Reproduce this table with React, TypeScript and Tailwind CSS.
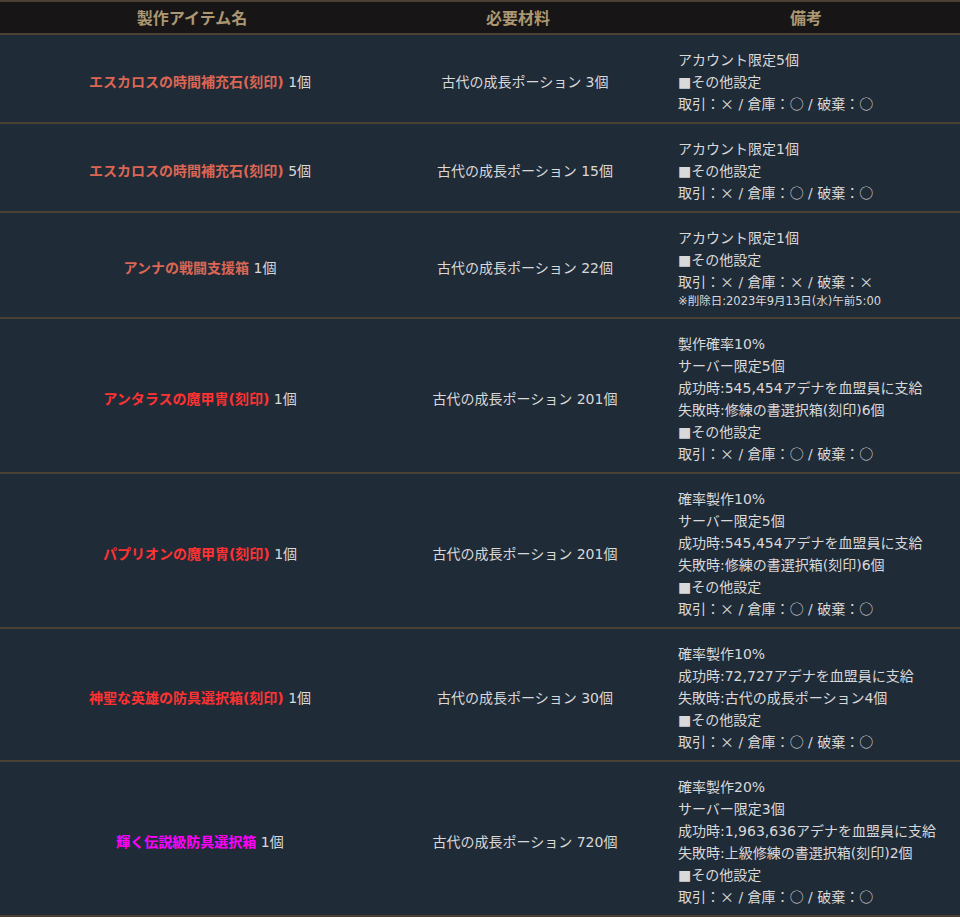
import React from "react";

type Row = {
  name: string;
  color: string;
  qty: string;
  mat: string;
  notes: string[];
  small?: string;
};

const ORANGE = "text-[#dc6654]";
const RED = "text-[#ff3232]";
const MAG = "text-[#ff00ff]";

const rows: Row[] = [
  {
    name: "エスカロスの時間補充石(刻印)",
    color: ORANGE,
    qty: "1個",
    mat: "古代の成長ポーション 3個",
    notes: ["アカウント限定5個", "■その他設定", "取引：× / 倉庫：○ / 破棄：○"],
  },
  {
    name: "エスカロスの時間補充石(刻印)",
    color: ORANGE,
    qty: "5個",
    mat: "古代の成長ポーション 15個",
    notes: ["アカウント限定1個", "■その他設定", "取引：× / 倉庫：○ / 破棄：○"],
  },
  {
    name: "アンナの戦闘支援箱",
    color: ORANGE,
    qty: "1個",
    mat: "古代の成長ポーション 22個",
    notes: ["アカウント限定1個", "■その他設定", "取引：× / 倉庫：× / 破棄：×"],
    small: "※削除日:2023年9月13日(水)午前5:00",
  },
  {
    name: "アンタラスの魔甲冑(刻印)",
    color: RED,
    qty: "1個",
    mat: "古代の成長ポーション 201個",
    notes: [
      "製作確率10%",
      "サーバー限定5個",
      "成功時:545,454アデナを血盟員に支給",
      "失敗時:修練の書選択箱(刻印)6個",
      "■その他設定",
      "取引：× / 倉庫：○ / 破棄：○",
    ],
  },
  {
    name: "パプリオンの魔甲冑(刻印)",
    color: RED,
    qty: "1個",
    mat: "古代の成長ポーション 201個",
    notes: [
      "確率製作10%",
      "サーバー限定5個",
      "成功時:545,454アデナを血盟員に支給",
      "失敗時:修練の書選択箱(刻印)6個",
      "■その他設定",
      "取引：× / 倉庫：○ / 破棄：○",
    ],
  },
  {
    name: "神聖な英雄の防具選択箱(刻印)",
    color: RED,
    qty: "1個",
    mat: "古代の成長ポーション 30個",
    notes: [
      "確率製作10%",
      "成功時:72,727アデナを血盟員に支給",
      "失敗時:古代の成長ポーション4個",
      "■その他設定",
      "取引：× / 倉庫：○ / 破棄：○",
    ],
  },
  {
    name: "輝く伝説級防具選択箱",
    color: MAG,
    qty: "1個",
    mat: "古代の成長ポーション 720個",
    notes: [
      "確率製作20%",
      "サーバー限定3個",
      "成功時:1,963,636アデナを血盟員に支給",
      "失敗時:上級修練の書選択箱(刻印)2個",
      "■その他設定",
      "取引：× / 倉庫：○ / 破棄：○",
    ],
  },
];

function Line({ text }: { text: string }) {
  const parts = text.split(/([×○])/);
  return (
    <div className="h-[22px]">
      {parts.map((p, k) =>
        p === "○" || p === "×" ? (
          <span
            key={k}
            className="leading-[12px]"
            style={{ fontFamily: '"Noto Sans CJK JP", sans-serif' }}
          >
            {p}
          </span>
        ) : (
          <React.Fragment key={k}>{p}</React.Fragment>
        )
      )}
    </div>
  );
}

export default function App() {
  return (
    <div
      className="w-[960px] h-[917px] bg-[#202b38] text-[14px] text-[#d9d9d9] overflow-hidden"
      style={{ fontFamily: '"DejaVu Sans", "Noto Sans CJK JP", sans-serif' }}
    >
      <div className="grid grid-cols-[384px_268px_308px] h-[35px] bg-[#171515] border-t-2 border-b-2 border-[#4a4033] font-bold text-[16px] text-[#ab9872] items-center text-center leading-[22px]">
        <div className="pt-[2px]">製作アイテム名</div>
        <div className="pt-[2px]">必要材料</div>
        <div className="pt-[2px]">備考</div>
      </div>
      {rows.map((r, i) => (
        <div
          key={i}
          className="grid grid-cols-[400px_250px_310px] items-center border-b-2 border-[#4a4033]"
        >
          <div className="text-center leading-[22px] pt-[6px]">
            <span className={`font-bold ${r.color}`}>{r.name}</span> {r.qty}
          </div>
          <div className="text-center leading-[22px] pt-[6px]">{r.mat}</div>
          <div className="pl-[28px] pt-[14px] pb-[7px] leading-[22px]">
            {r.notes.map((n, j) => (
              <Line key={j} text={n} />
            ))}
            {r.small && (
              <div className="text-[11.5px] leading-[17px]">{r.small}</div>
            )}
          </div>
        </div>
      ))}
    </div>
  );
}
